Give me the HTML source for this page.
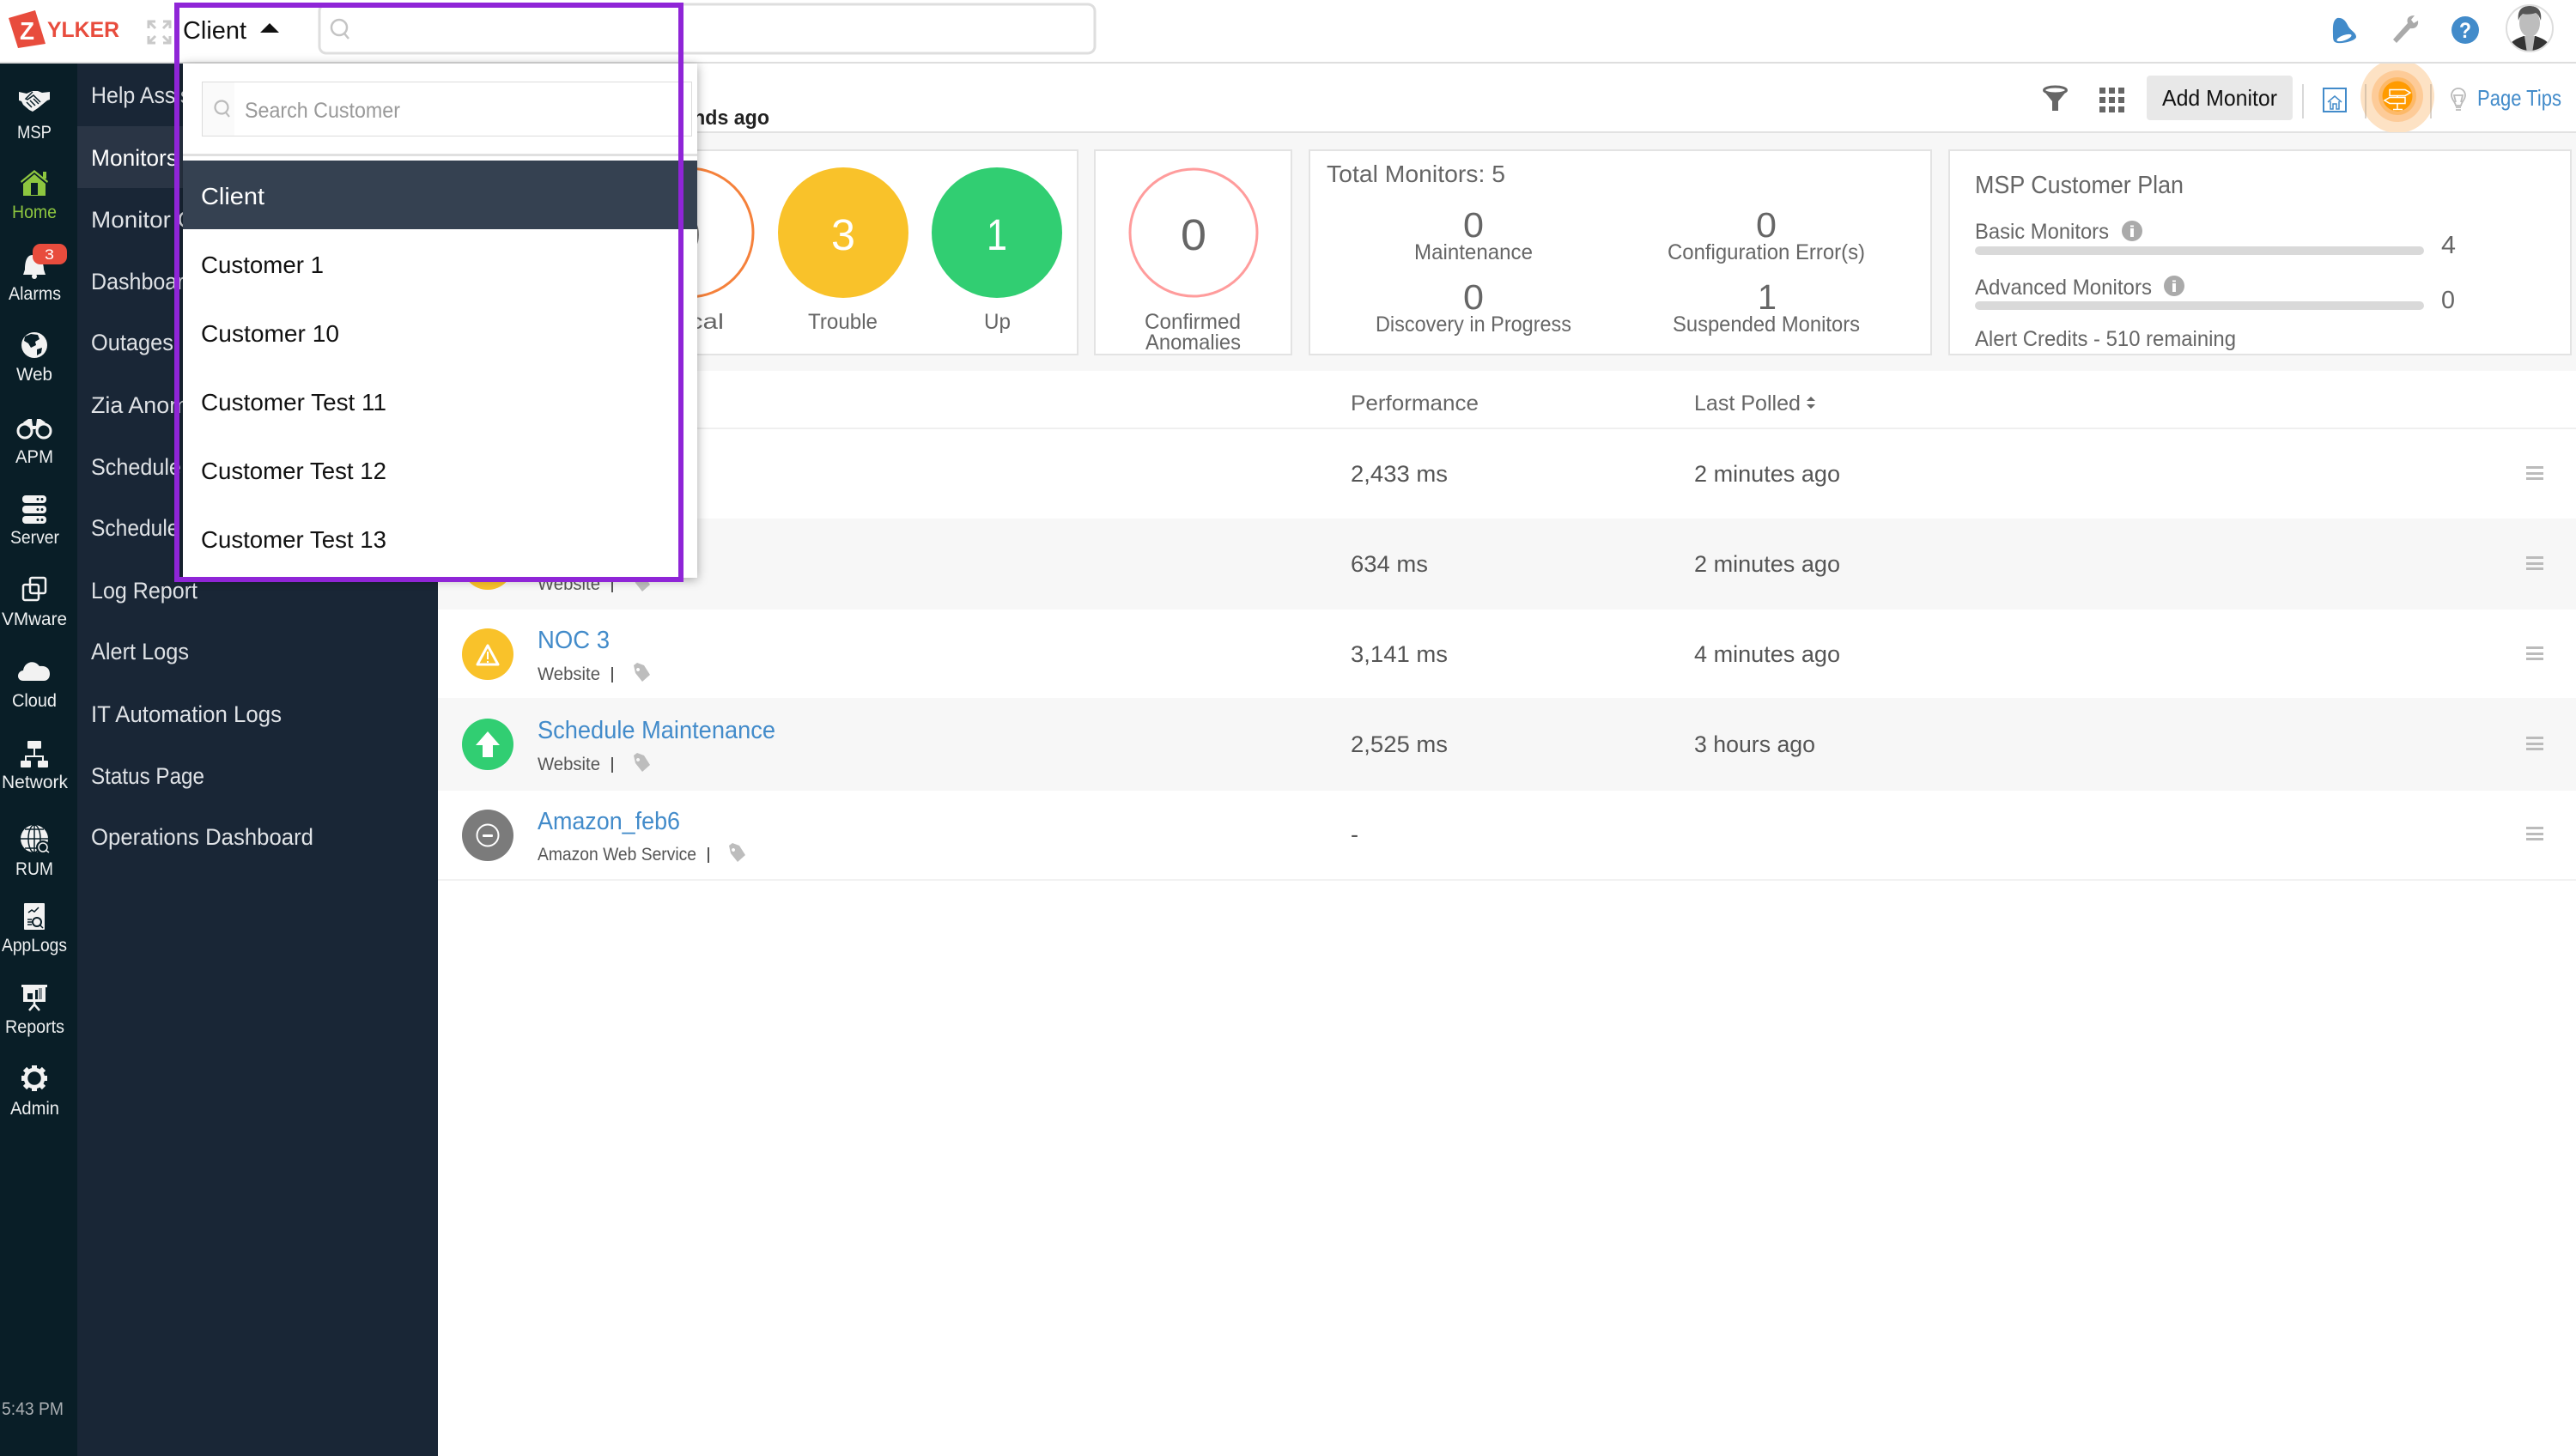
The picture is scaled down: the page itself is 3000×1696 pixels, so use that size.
<!DOCTYPE html>
<html lang="en">
<head>
<meta charset="utf-8">
<title>Zylker Monitors</title>
<style>
html,body{margin:0;padding:0;background:#fff;width:3000px;height:1696px;overflow:hidden}
svg{display:block}
text{font-family:"Liberation Sans",Arial,sans-serif}
.nav{font-size:27px;fill:#dfe2e6}
.rail{font-size:21px;fill:#eef0f1}
.dd{font-size:28px;fill:#111}
.g{fill:#666;font-size:25px}
.row{fill:#555;font-size:27px}
.link{fill:#428bca;font-size:29px}
.sub{fill:#555;font-size:21px}
</style>
</head>
<body>
<svg xmlns="http://www.w3.org/2000/svg" width="3000" height="1696" viewBox="0 0 3000 1696">
<rect width="3000" height="1696" fill="#fff"/>

<!-- Sub bar + summary background -->
<rect x="510" y="155" width="2490" height="277" fill="#f7f7f7"/>
<rect x="0" y="72" width="3000" height="2" fill="#dedede"/>
<rect x="510" y="153" width="2490" height="2" fill="#e2e2e2"/>

<!-- Summary cards -->
<rect x="521" y="175" width="734" height="238" fill="#fff" stroke="#e3e3e3" stroke-width="2"/>
<rect x="1275" y="175" width="229" height="238" fill="#fff" stroke="#e3e3e3" stroke-width="2"/>
<rect x="1525" y="175" width="724" height="238" fill="#fff" stroke="#e3e3e3" stroke-width="2"/>
<rect x="2270" y="175" width="724" height="238" fill="#fff" stroke="#e3e3e3" stroke-width="2"/>

<circle cx="802" cy="271" r="75" fill="#fff" stroke="#f5813b" stroke-width="3"/>
<text x="786" y="291" font-size="51" fill="#777" textLength="30" lengthAdjust="spacingAndGlyphs">0</text>
<text x="747" y="383" class="g" textLength="96" lengthAdjust="spacingAndGlyphs">Critical</text>
<circle cx="982" cy="271" r="76" fill="#f9c22a"/>
<text x="968" y="291" font-size="51" fill="#fff" textLength="28" lengthAdjust="spacingAndGlyphs">3</text>
<text x="941" y="383" class="g" textLength="81" lengthAdjust="spacingAndGlyphs">Trouble</text>
<circle cx="1161" cy="271" r="76" fill="#31ce72"/>
<text x="1149" y="291" font-size="51" fill="#fff" textLength="24" lengthAdjust="spacingAndGlyphs">1</text>
<text x="1146" y="383" class="g" textLength="31" lengthAdjust="spacingAndGlyphs">Up</text>
<circle cx="1390" cy="271" r="74" fill="#fff" stroke="#ff9c9c" stroke-width="3"/>
<text x="1375" y="291" font-size="51" fill="#666" textLength="30" lengthAdjust="spacingAndGlyphs">0</text>
<text x="1333" y="383" class="g" textLength="112" lengthAdjust="spacingAndGlyphs">Confirmed</text>
<text x="1334" y="407" class="g" textLength="111" lengthAdjust="spacingAndGlyphs">Anomalies</text>

<text x="1545" y="212" font-size="28" fill="#666" textLength="208" lengthAdjust="spacingAndGlyphs">Total Monitors: 5</text>
<text x="1704" y="276" font-size="41" fill="#666" textLength="24" lengthAdjust="spacingAndGlyphs">0</text>
<text x="1647" y="302" class="g" textLength="138" lengthAdjust="spacingAndGlyphs">Maintenance</text>
<text x="2045" y="276" font-size="41" fill="#666" textLength="24" lengthAdjust="spacingAndGlyphs">0</text>
<text x="1942" y="302" class="g" textLength="230" lengthAdjust="spacingAndGlyphs">Configuration Error(s)</text>
<text x="1704" y="360" font-size="41" fill="#666" textLength="24" lengthAdjust="spacingAndGlyphs">0</text>
<text x="1602" y="386" class="g" textLength="228" lengthAdjust="spacingAndGlyphs">Discovery in Progress</text>
<text x="2047" y="360" font-size="41" fill="#666" textLength="22" lengthAdjust="spacingAndGlyphs">1</text>
<text x="1948" y="386" class="g" textLength="218" lengthAdjust="spacingAndGlyphs">Suspended Monitors</text>

<text x="2300" y="225" font-size="29" fill="#666" textLength="243" lengthAdjust="spacingAndGlyphs">MSP Customer Plan</text>
<text x="2300" y="278" class="g" textLength="156" lengthAdjust="spacingAndGlyphs">Basic Monitors</text>
<circle cx="2483" cy="269" r="12" fill="#aaa"/><text x="2479" y="276" font-size="18" font-weight="bold" fill="#fff" textLength="8" lengthAdjust="spacingAndGlyphs">i</text>
<rect x="2300" y="287" width="523" height="10" rx="5" fill="#d9d9d9"/>
<text x="2843" y="295" font-size="29" fill="#666" textLength="17" lengthAdjust="spacingAndGlyphs">4</text>
<text x="2300" y="343" class="g" textLength="206" lengthAdjust="spacingAndGlyphs">Advanced Monitors</text>
<circle cx="2532" cy="333" r="12" fill="#aaa"/><text x="2528" y="340" font-size="18" font-weight="bold" fill="#fff" textLength="8" lengthAdjust="spacingAndGlyphs">i</text>
<rect x="2300" y="351" width="523" height="10" rx="5" fill="#d9d9d9"/>
<text x="2843" y="359" font-size="29" fill="#666" textLength="16" lengthAdjust="spacingAndGlyphs">0</text>
<text x="2300" y="403" class="g" textLength="304" lengthAdjust="spacingAndGlyphs">Alert Credits - 510 remaining</text>

<!-- Table -->
<rect x="510" y="498" width="2490" height="2" fill="#efefef"/>
<text x="1573" y="478" class="g" font-size="25" textLength="149" lengthAdjust="spacingAndGlyphs">Performance</text>
<text x="1973" y="478" class="g" textLength="124" lengthAdjust="spacingAndGlyphs">Last Polled</text>
<path d="M2104 467l5-5 5 5zM2104 471l5 5 5-5z" fill="#666"/>

<rect x="510" y="604" width="2490" height="106" fill="#f7f7f7"/>
<rect x="510" y="813" width="2490" height="108" fill="#f7f7f7"/>
<rect x="510" y="1024" width="2490" height="2" fill="#f2f2f2"/>

<text x="1573" y="561" class="row" textLength="113" lengthAdjust="spacingAndGlyphs">2,433 ms</text>
<text x="1973" y="561" class="row" textLength="170" lengthAdjust="spacingAndGlyphs">2 minutes ago</text>
<text x="1573" y="666" class="row" textLength="90" lengthAdjust="spacingAndGlyphs">634 ms</text>
<text x="1973" y="666" class="row" textLength="170" lengthAdjust="spacingAndGlyphs">2 minutes ago</text>
<text x="1573" y="771" class="row" textLength="113" lengthAdjust="spacingAndGlyphs">3,141 ms</text>
<text x="1973" y="771" class="row" textLength="170" lengthAdjust="spacingAndGlyphs">4 minutes ago</text>
<text x="1573" y="876" class="row" textLength="113" lengthAdjust="spacingAndGlyphs">2,525 ms</text>
<text x="1973" y="876" class="row" textLength="141" lengthAdjust="spacingAndGlyphs">3 hours ago</text>
<text x="1573" y="981" class="row" textLength="9" lengthAdjust="spacingAndGlyphs">-</text>

<g fill="#bbb">
<rect x="2942" y="543" width="20" height="3"/><rect x="2942" y="550" width="20" height="3"/><rect x="2942" y="556" width="20" height="3"/>
<rect x="2942" y="648" width="20" height="3"/><rect x="2942" y="655" width="20" height="3"/><rect x="2942" y="661" width="20" height="3"/>
<rect x="2942" y="753" width="20" height="3"/><rect x="2942" y="760" width="20" height="3"/><rect x="2942" y="766" width="20" height="3"/>
<rect x="2942" y="858" width="20" height="3"/><rect x="2942" y="865" width="20" height="3"/><rect x="2942" y="871" width="20" height="3"/>
<rect x="2942" y="963" width="20" height="3"/><rect x="2942" y="970" width="20" height="3"/><rect x="2942" y="976" width="20" height="3"/>
</g>

<!-- row icons -->
<circle cx="568" cy="657" r="30" fill="#f9c22a"/>
<circle cx="568" cy="762" r="30" fill="#f9c22a"/>
<path d="M568 752l12 22h-24z" fill="none" stroke="#fff" stroke-width="3" stroke-linejoin="round"/>
<rect x="567" y="759" width="2" height="9" fill="#fff"/><rect x="567" y="770" width="2" height="2" fill="#fff"/>
<circle cx="568" cy="867" r="30" fill="#31ce72"/>
<path d="M568 852l14 16h-8v14h-12v-14h-8z" fill="#fff"/>
<circle cx="568" cy="973" r="30" fill="#7b7b7b"/>
<circle cx="568" cy="973" r="12.5" fill="none" stroke="#fff" stroke-width="2"/>
<rect x="562" y="972" width="12" height="3" rx="1" fill="#fff"/>

<text x="626" y="755" class="link" textLength="84" lengthAdjust="spacingAndGlyphs">NOC 3</text>
<text x="626" y="860" class="link" textLength="277" lengthAdjust="spacingAndGlyphs">Schedule Maintenance</text>
<text x="626" y="966" class="link" textLength="166" lengthAdjust="spacingAndGlyphs">Amazon_feb6</text>
<text x="626" y="687" class="sub" textLength="73" lengthAdjust="spacingAndGlyphs">Website</text>
<text x="626" y="792" class="sub" textLength="73" lengthAdjust="spacingAndGlyphs">Website</text>
<text x="626" y="897" class="sub" textLength="73" lengthAdjust="spacingAndGlyphs">Website</text>
<text x="626" y="1002" class="sub" textLength="185" lengthAdjust="spacingAndGlyphs">Amazon Web Service</text>
<g fill="#555">
<rect x="712" y="672" width="2" height="18"/><rect x="712" y="777" width="2" height="18"/><rect x="712" y="882" width="2" height="18"/><rect x="824" y="987" width="2" height="18"/>
</g>
<defs><path id="tag" d="M0 3l4-3 8 3 7 11-9 8-8-10zM5 6a2 2 0 1 0 .1 0z" fill-rule="evenodd" fill="#bdbdbd"/></defs>
<use href="#tag" x="738" y="667"/>
<use href="#tag" x="738" y="772"/>
<use href="#tag" x="738" y="877"/>
<use href="#tag" x="849" y="982"/>

<!-- Header -->
<path d="M10 21l31-9 12 39-32 5z" fill="#e84c3d"/>
<text x="23" y="46" font-size="29" font-weight="bold" fill="#fff" textLength="17" lengthAdjust="spacingAndGlyphs">Z</text>
<text x="55" y="43" font-size="25" font-weight="bold" fill="#e84c3d" textLength="84" lengthAdjust="spacingAndGlyphs">YLKER</text>
<g fill="none" stroke="#c9c9c9" stroke-width="3">
<path d="M173 33v-8h8M173 25l8 8M198 33v-8h-8M198 25l-8 8M173 42v8h8M173 50l8-8M198 42v8h-8M198 50l-8-8"/>
</g>
<text x="213" y="45" font-size="29" fill="#111" textLength="74" lengthAdjust="spacingAndGlyphs">Client</text>
<path d="M303 38l11-11 11 11z" fill="#111"/>
<rect x="372" y="5" width="903" height="57" rx="8" fill="#fff" stroke="#dedede" stroke-width="3"/>
<circle cx="395" cy="32" r="9" fill="none" stroke="#c4c4c4" stroke-width="2.5"/><path d="M401 39l5 6" stroke="#c4c4c4" stroke-width="2.5"/>

<!-- top-right icons -->
<path d="M2722 21C2730 20 2733 27 2735 31C2738 36 2744 38 2744 43C2744 47 2730 51 2722 50C2717 49 2717 46 2717 40C2717 33 2716 24 2722 21Z" fill="#428bca"/>
<ellipse cx="2730" cy="44" rx="9" ry="3" fill="#fff" transform="rotate(-20 2730 44)"/>
<path d="M2787 46l17-19c-2-6 2-9 8-9l-4 5 3 4 5-3c1 6-3 10-9 9l-16 17z" fill="#aaa"/>
<circle cx="2871" cy="35" r="16" fill="#428bca"/>
<text x="2864" y="44" font-size="25" font-weight="bold" fill="#fff" textLength="14" lengthAdjust="spacingAndGlyphs">?</text>
<clipPath id="av"><ellipse cx="2946" cy="33" rx="26" ry="26"/></clipPath>
<ellipse cx="2946" cy="33" rx="27" ry="27" fill="#fff" stroke="#ddd" stroke-width="2"/>
<g clip-path="url(#av)">
<ellipse cx="2946" cy="27" rx="12" ry="16" fill="#bdbdbd"/>
<path d="M2933 24c-2-14 6-17 13-17s15 3 13 17c-2-6-4-8-6-9-5 2-12 2-15 1-2 2-4 4-5 8z" fill="#555"/>
<path d="M2919 62c2-14 12-17 20-20h14c8 3 18 6 20 20z" fill="#333"/>
<path d="M2940 42h12l-3 20h-6z" fill="#bbb"/>
</g>

<!-- sub bar tools -->
<ellipse cx="2393.500" cy="105" rx="13" ry="4" fill="#fff" stroke="#666" stroke-width="3"/>
<path d="M2381 107l9 11v11h7v-11l9-11c-8 3-17 3-25 0z" fill="#666"/>
<g fill="#666">
<rect x="2445" y="102" width="7" height="7"/><rect x="2456" y="102" width="7" height="7"/><rect x="2467" y="102" width="7" height="7"/>
<rect x="2445" y="113" width="7" height="7"/><rect x="2456" y="113" width="7" height="7"/><rect x="2467" y="113" width="7" height="7"/>
<rect x="2445" y="124" width="7" height="7"/><rect x="2456" y="124" width="7" height="7"/><rect x="2467" y="124" width="7" height="7"/>
</g>
<rect x="2500" y="88" width="170" height="52" rx="4" fill="#e8e8e8"/>
<text x="2518" y="123" font-size="26" fill="#111" textLength="134" lengthAdjust="spacingAndGlyphs">Add Monitor</text>
<rect x="2681" y="98" width="2" height="40" fill="#d8d8d8"/>
<rect x="2706" y="103" width="26" height="27" fill="none" stroke="#428bca" stroke-width="2"/>
<path d="M2711 119l8-7 8 7M2714 118v9h3v-6h4v6h3v-9" fill="none" stroke="#428bca" stroke-width="1.500"/>
<clipPath id="subclip"><rect x="2740" y="74" width="110" height="80"/></clipPath>
<g clip-path="url(#subclip)">
<circle cx="2792" cy="112" r="43" fill="#fde2c4"/>
<circle cx="2792" cy="112" r="30" fill="#fdcb98"/>
<circle cx="2792" cy="112" r="22" fill="#fdb968"/>
<circle cx="2792" cy="112" r="17.500" fill="#ff9b00"/>
</g>
<rect x="2754" y="98" width="2" height="40" fill="#b0a090" fill-opacity=".45"/>
<rect x="2830" y="98" width="2" height="40" fill="#b0a090" fill-opacity=".45"/>
<g fill="none" stroke="#fff" stroke-width="1.500">
<path d="M2783 104.500h18l6 3.500-6 3.500h-18zM2801 113.500h-18l-6 3.500 6 3.500h18zM2792 111.500v2M2792 120.500v6.500M2787 127.500h11"/>
</g>
<g fill="none" stroke="#bbb" stroke-width="1.800">
<path d="M2863 103c-5 0-8 4-8 8 0 5 4 7 5 12h6c1-5 5-7 5-12 0-4-3-8-8-8zM2860 125h6M2860 128h6M2860 119l-2-8h10l-2 8"/>
</g>
<text x="2885" y="123" font-size="26" fill="#428bca" textLength="98" lengthAdjust="spacingAndGlyphs">Page Tips</text>
<text x="793" y="145" font-size="24" font-weight="bold" fill="#222" textLength="103" lengthAdjust="spacingAndGlyphs">onds ago</text>

<!-- Sidebar -->
<rect x="0" y="74" width="90" height="1622" fill="#091e27"/>
<rect x="90" y="74" width="420" height="1622" fill="#192636"/>
<rect x="90" y="147" width="420" height="72" fill="#2a3545"/>

<text x="106" y="120" class="nav" textLength="158" lengthAdjust="spacingAndGlyphs">Help Assistant</text>
<text x="106" y="193" class="nav" style="fill:#fff" textLength="101" lengthAdjust="spacingAndGlyphs">Monitors</text>
<text x="106" y="265" class="nav" textLength="192" lengthAdjust="spacingAndGlyphs">Monitor Groups</text>
<text x="106" y="337" class="nav" textLength="135" lengthAdjust="spacingAndGlyphs">Dashboards</text>
<text x="106" y="408" class="nav" textLength="96" lengthAdjust="spacingAndGlyphs">Outages</text>
<text x="106" y="481" class="nav" textLength="148" lengthAdjust="spacingAndGlyphs">Zia Anomaly</text>
<text x="106" y="553" class="nav" textLength="200" lengthAdjust="spacingAndGlyphs">Schedule Reports</text>
<text x="106" y="624" class="nav" textLength="250" lengthAdjust="spacingAndGlyphs">Schedule Maintenance</text>
<text x="106" y="697" class="nav" textLength="124" lengthAdjust="spacingAndGlyphs">Log Report</text>
<text x="106" y="768" class="nav" textLength="114" lengthAdjust="spacingAndGlyphs">Alert Logs</text>
<text x="106" y="841" class="nav" textLength="222" lengthAdjust="spacingAndGlyphs">IT Automation Logs</text>
<text x="106" y="913" class="nav" textLength="132" lengthAdjust="spacingAndGlyphs">Status Page</text>
<text x="106" y="984" class="nav" textLength="259" lengthAdjust="spacingAndGlyphs">Operations Dashboard</text>

<text x="20" y="161" class="rail" textLength="40" lengthAdjust="spacingAndGlyphs">MSP</text>
<text x="14" y="254" class="rail" style="fill:#8dc63f" textLength="52" lengthAdjust="spacingAndGlyphs">Home</text>
<text x="10" y="349" class="rail" textLength="61" lengthAdjust="spacingAndGlyphs">Alarms</text>
<text x="19" y="443" class="rail" textLength="42" lengthAdjust="spacingAndGlyphs">Web</text>
<text x="18" y="539" class="rail" textLength="44" lengthAdjust="spacingAndGlyphs">APM</text>
<text x="12" y="633" class="rail" textLength="57" lengthAdjust="spacingAndGlyphs">Server</text>
<text x="2" y="728" class="rail" textLength="76" lengthAdjust="spacingAndGlyphs">VMware</text>
<text x="14" y="823" class="rail" textLength="52" lengthAdjust="spacingAndGlyphs">Cloud</text>
<text x="2" y="918" class="rail" textLength="77" lengthAdjust="spacingAndGlyphs">Network</text>
<text x="18" y="1019" class="rail" textLength="44" lengthAdjust="spacingAndGlyphs">RUM</text>
<text x="2" y="1108" class="rail" textLength="76" lengthAdjust="spacingAndGlyphs">AppLogs</text>
<text x="6" y="1203" class="rail" textLength="69" lengthAdjust="spacingAndGlyphs">Reports</text>
<text x="12" y="1298" class="rail" textLength="57" lengthAdjust="spacingAndGlyphs">Admin</text>
<text x="2" y="1648" font-size="21" fill="#a9aeb2" textLength="72" lengthAdjust="spacingAndGlyphs">5:43 PM</text>

<!-- rail icons -->
<!-- handshake -->
<path d="M22 107l9 2 7-3h6l5 2 9-1v9l-3 1-11 9-6 4-4-2-7-6-2-4-3-1z" fill="#f2f2f2"/>
<path d="M47 119l-8-8-7 5-2-1 8-8M31 119l6 6M35 117l6 6M39 115l6 6" fill="none" stroke="#091e27" stroke-width="1.500"/>
<!-- home -->
<path d="M24 211l16-13 16 13-1 2-15-12-15 12z" fill="#8dc63f"/>
<rect x="50" y="200" width="4" height="8" fill="#8dc63f"/>
<path d="M27 214l13-11 13 11v14h-26z" fill="#8dc63f"/><rect x="36" y="213" width="8" height="14" fill="#091e27"/>

<path d="M38 297c8 0 13 8 13 17l2 6h-26l2-6c0-9 2-17 9-17z" fill="#f2f2f2"/><circle cx="40" cy="322" r="3" fill="#f2f2f2"/>
<rect x="38" y="284" width="40" height="24" rx="9" fill="#e84c3d"/>
<text x="52" y="302" font-size="17" fill="#fff" textLength="11" lengthAdjust="spacingAndGlyphs">3</text>

<circle cx="40" cy="402" r="15" fill="#f2f2f2"/>
<path d="M36 389l8 1 2 5-5 3 1 4-6 3-3-5-5-3 1-5zM43 407l6-2-1 6-5 3z" fill="#091e27"/>

<g fill="none" stroke="#f2f2f2" stroke-width="3">
<circle cx="29" cy="502" r="8"/><circle cx="51" cy="502" r="8"/>
</g>
<path d="M27 492l6-4h4l1 8h4l1-8h4l6 4-5 3-7 5h-4l-7-5z" fill="#f2f2f2"/>

<g fill="#f2f2f2">
<rect x="26" y="577" width="28" height="9" rx="4"/><rect x="26" y="589" width="28" height="9" rx="4"/><rect x="26" y="601" width="28" height="9" rx="4"/>
</g>
<g fill="#091e27">
<circle cx="44" cy="581.500" r="1.500"/><circle cx="49" cy="581.500" r="1.500"/><circle cx="44" cy="593.500" r="1.500"/><circle cx="49" cy="593.500" r="1.500"/><circle cx="44" cy="605.500" r="1.500"/><circle cx="49" cy="605.500" r="1.500"/>
</g>

<g fill="none" stroke="#f2f2f2" stroke-width="2.500">
<rect x="35" y="673" width="18" height="18" rx="2"/><rect x="27" y="681" width="18" height="18" rx="2"/>
</g>

<path d="M27 793c-8 0-8-11 0-12 1-9 12-14 19-5 8-1 12 3 12 9 0 5-3 8-7 8z" fill="#f2f2f2"/>

<g fill="#f2f2f2">
<rect x="32" y="863" width="16" height="9" rx="1"/><rect x="24" y="886" width="12" height="8" rx="1"/><rect x="44" y="886" width="12" height="8" rx="1"/>
</g>
<path d="M40 872v8M30 886v-5h20v5" fill="none" stroke="#f2f2f2" stroke-width="2"/>

<circle cx="40" cy="977" r="16" fill="#f2f2f2"/>
<path d="M24 977h32M40 961v32M29 966h22M29 988h22" stroke="#091e27" stroke-width="1.500" fill="none"/>
<ellipse cx="40" cy="977" rx="7" ry="16" fill="none" stroke="#091e27" stroke-width="1.500"/>
<circle cx="50" cy="987" r="8" fill="#091e27"/><circle cx="50" cy="987" r="5" fill="none" stroke="#f2f2f2" stroke-width="1.500"/><path d="M53 990l4 3" stroke="#f2f2f2" stroke-width="1.500"/>

<rect x="28" y="1052" width="24" height="31" rx="1" fill="#f2f2f2"/>
<path d="M33 1063l4-3 3 2 5-5" fill="none" stroke="#091e27" stroke-width="1.500"/>
<circle cx="43" cy="1074" r="5" fill="none" stroke="#091e27" stroke-width="2"/><path d="M47 1078l3 3M32 1071h5M32 1074h5M32 1077h5" stroke="#091e27" stroke-width="1.500"/>

<path d="M25 1147h30v3h-2v17H27v-17h-2z" fill="#f2f2f2"/>
<rect x="32" y="1157" width="6" height="7" fill="#091e27"/><rect x="41" y="1153" width="3" height="11" fill="#091e27"/><rect x="45" y="1151" width="4" height="13" fill="#8a9297"/>
<path d="M40 1167v3M34 1177l6-7 6 7" stroke="#f2f2f2" stroke-width="2.500" fill="none"/>

<circle cx="40" cy="1256" r="10" fill="none" stroke="#f2f2f2" stroke-width="4.500"/>
<g stroke="#f2f2f2" stroke-width="6">
<path d="M40 1241v6M40 1265v6M25 1256h6M49 1256h6M29 1245l5 5M46 1262l5 5M51 1245l-5 5M34 1262l-5 5"/>
</g>

<!-- Dropdown -->
<rect x="213" y="74" width="599" height="599" fill="#fff" style="filter:drop-shadow(0 2px 6px rgba(0,0,0,.35))"/>
<rect x="235.500" y="95.500" width="570" height="63" fill="#fff" stroke="#dcdcdc"/>
<rect x="236" y="96" width="37" height="62" fill="#fafafa"/>
<circle cx="258" cy="125" r="7.500" fill="none" stroke="#bbb" stroke-width="2.200"/><path d="M263 131l4 5" stroke="#bbb" stroke-width="2.200"/>
<text x="285" y="137" font-size="25" fill="#999" textLength="181" lengthAdjust="spacingAndGlyphs">Search Customer</text>
<rect x="213" y="179" width="599" height="3" fill="#e0e0e0"/>
<rect x="213" y="187" width="599" height="80" fill="#354151"/>
<text x="234" y="238" class="dd" style="fill:#fff" textLength="74" lengthAdjust="spacingAndGlyphs">Client</text>
<text x="234" y="318" class="dd" textLength="143" lengthAdjust="spacingAndGlyphs">Customer 1</text>
<text x="234" y="398" class="dd" textLength="161" lengthAdjust="spacingAndGlyphs">Customer 10</text>
<text x="234" y="478" class="dd" textLength="216" lengthAdjust="spacingAndGlyphs">Customer Test 11</text>
<text x="234" y="558" class="dd" textLength="216" lengthAdjust="spacingAndGlyphs">Customer Test 12</text>
<text x="234" y="638" class="dd" textLength="216" lengthAdjust="spacingAndGlyphs">Customer Test 13</text>

<!-- Purple highlight -->
<rect x="206" y="6" width="587" height="669" fill="none" stroke="#8f25d7" stroke-width="6"/>
</svg>
</body>
</html>
